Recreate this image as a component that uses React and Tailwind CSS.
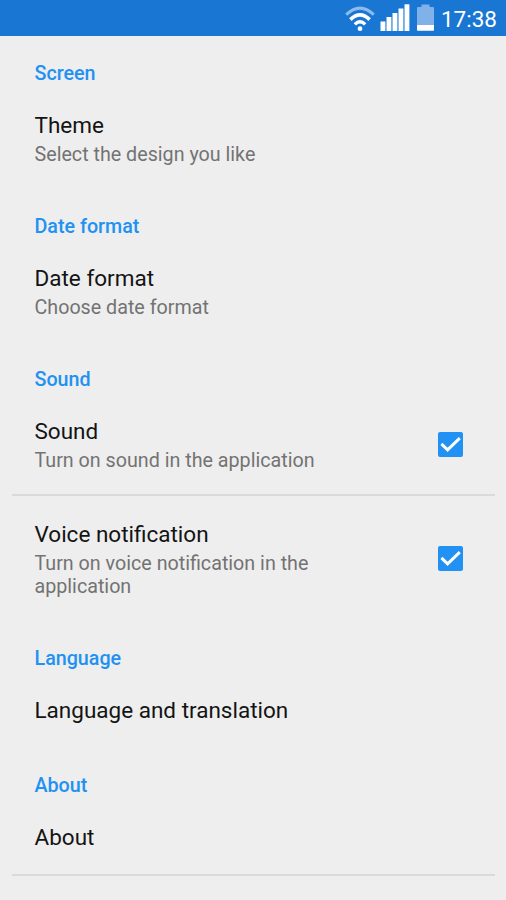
import React, { useState } from 'react';

// Status bar icons
const WifiIcon = () => (
  <svg className="w-[30px] h-[26px]" viewBox="0 0 30 26" fill="none" strokeLinecap="butt">
    <path d="M1.2 8.7 Q15 -4.3 28.8 8.7" stroke="#8dbcec" strokeWidth="3" />
    <path d="M5.4 13.6 Q15 4.2 24.6 13.6" stroke="#fff" strokeWidth="3.6" />
    <path d="M9.8 18.4 Q15 13.2 20.2 18.4" stroke="#fff" strokeWidth="3.4" />
    <circle cx="15" cy="22.7" r="2.4" fill="#fff" />
  </svg>
);

const SignalIcon = () => (
  <svg className="w-[30px] h-[27px]" viewBox="0 0 30 27" fill="#fff">
    <rect x="0.5" y="17.5" width="4.9" height="9.5" />
    <rect x="6.5" y="13" width="4.9" height="14" />
    <rect x="12.5" y="9" width="4.9" height="18" />
    <rect x="18.5" y="4.5" width="4.9" height="22.5" />
    <rect x="24.5" y="0.3" width="4.9" height="26.7" />
  </svg>
);

const BatteryIcon = () => (
  <svg className="w-[17px] h-[27px]" viewBox="0 0 17 27">
    <path d="M4.5 0.5h8V3H16a1 1 0 0 1 1 1V21H0V4a1 1 0 0 1 1-1H4.5z" fill="#80b1e8" />
    <path d="M0 21h17v5a.8.8 0 0 1-.8.8H.8a.8.8 0 0 1-.8-.8z" fill="#fff" />
  </svg>
);

const StatusBar = () => (
  <header className="flex h-[36px] items-start justify-end bg-[#1976d2] pr-[9px] text-white">
    <div className="mt-[6px] mr-[5px]"><WifiIcon /></div>
    <div className="mt-[4px] mr-[7px]"><SignalIcon /></div>
    <div className="mt-[4px] mr-[7px]"><BatteryIcon /></div>
    <span className="mt-[6px] text-[22.5px] leading-[26px]">17:38</span>
  </header>
);

const Checkbox = ({ checked, onChange, label }) => (
  <button
    role="checkbox"
    aria-checked={checked}
    aria-label={label}
    onClick={() => onChange(!checked)}
    className={`flex h-[25px] w-[25px] shrink-0 items-center justify-center rounded-[2px] ${
      checked ? 'bg-[#2191f3]' : 'border-2 border-[#757575]'
    }`}
  >
    {checked && (
      <svg className="h-[25px] w-[25px]" viewBox="0 0 25 25" fill="none" stroke="#fff" strokeWidth="2.9">
        <path d="M3.4 11.9 L9.6 17.9 L21.8 6.1" />
      </svg>
    )}
  </button>
);

const Section = ({ title, children }) => (
  <section>
    <h2 className="px-[34.5px] pt-[25px] text-[19.7px] font-medium leading-6 text-[#2191f3]">{title}</h2>
    {children}
  </section>
);

const Preference = ({ title, summary, children }) => (
  <div
    className={`flex items-center justify-between pt-6 pl-[34.5px] pr-[43px] ${
      summary ? 'pb-6' : 'pb-[23.5px]'
    }`}
  >
    <div className="w-[310px]">
      <h3 className="text-[22.5px] leading-[30px] text-[#141414]">{title}</h3>
      {summary && (
        <p className="mt-[3px] text-[19.7px] leading-[23.2px] text-[#737373]">{summary}</p>
      )}
    </div>
    {children}
  </div>
);

const Divider = () => <div className="mx-auto h-[2px] w-[483px] bg-[#dadada]" />;

const App = () => {
  const [sound, setSound] = useState(true);
  const [voice, setVoice] = useState(true);

  return (
    <div className="h-[900px] w-[506px] overflow-hidden bg-[#eeeeee] font-['Roboto',sans-serif]">
      <StatusBar />
      <main className="pt-[0.5px]">
        <Section title="Screen">
          <Preference title="Theme" summary="Select the design you like" />
        </Section>

        <Section title="Date format">
          <Preference title="Date format" summary="Choose date format" />
        </Section>

        <Section title="Sound">
          <Preference title="Sound" summary="Turn on sound in the application">
            <Checkbox checked={sound} onChange={setSound} label="Sound" />
          </Preference>
          <div className="-mt-[2px] -mb-[1.5px]"><Divider /></div>
          <Preference title="Voice notification" summary="Turn on voice notification in the application">
            <Checkbox checked={voice} onChange={setVoice} label="Voice notification" />
          </Preference>
        </Section>

        <Section title="Language">
          <Preference title="Language and translation" />
        </Section>

        <Section title="About">
          <Preference title="About" />
          <div className="-mt-[1px]"><Divider /></div>
        </Section>
      </main>
    </div>
  );
};

export default App;
